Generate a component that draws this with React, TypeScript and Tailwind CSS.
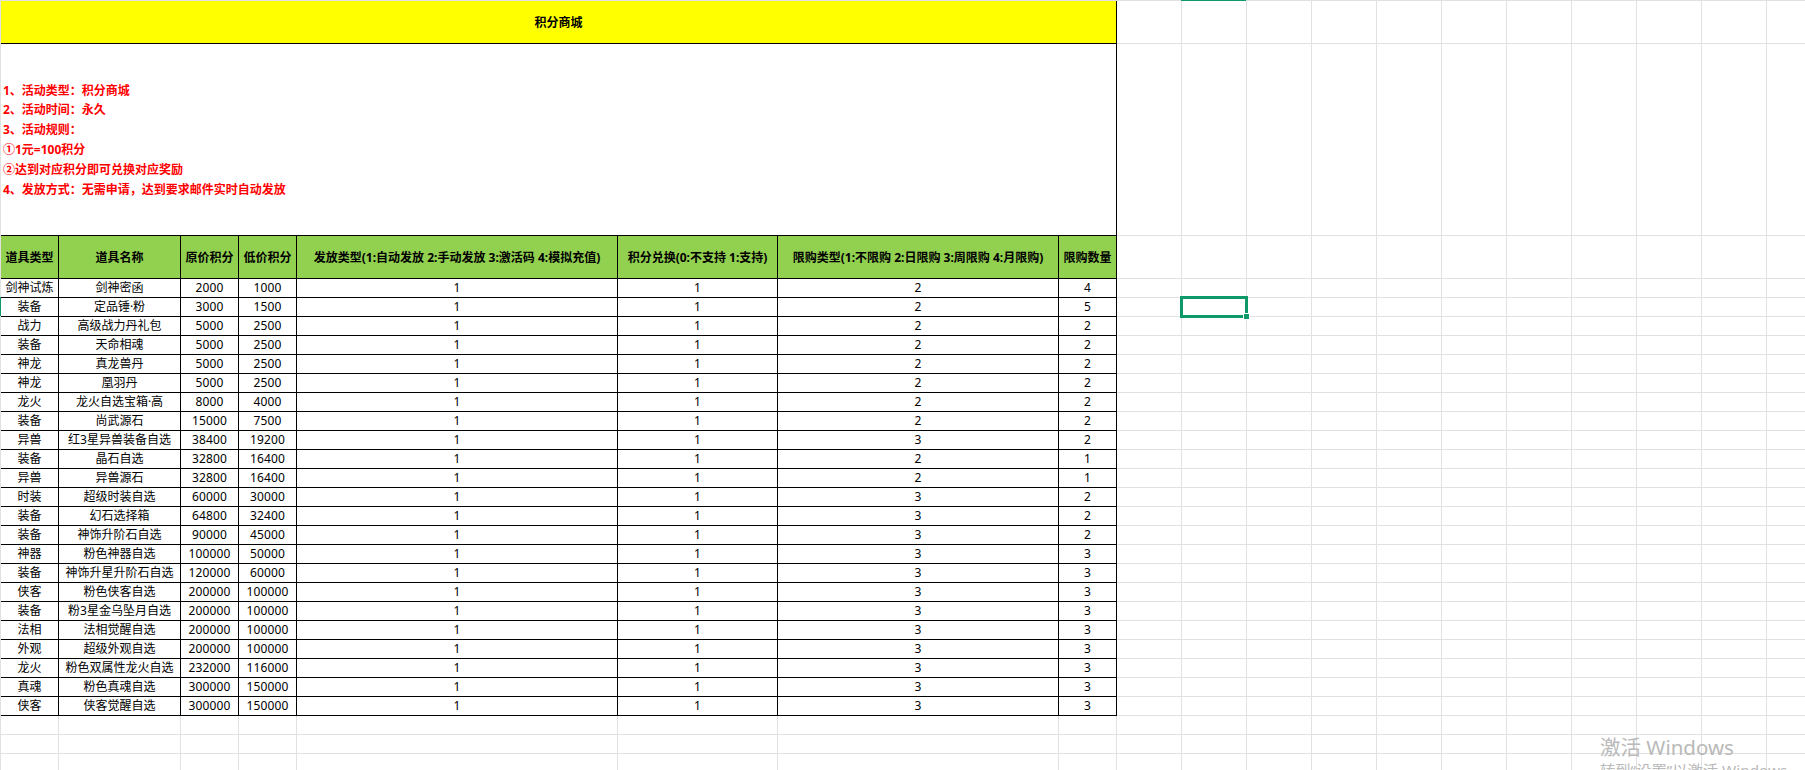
const rows: [string, string, string, string, string, string][] = [
  ["剑神试炼", "剑神密函", "2000", "1000", "2", "4"],
  ["装备", "定品锤·粉", "3000", "1500", "2", "5"],
  ["战力", "高级战力丹礼包", "5000", "2500", "2", "2"],
  ["装备", "天命相魂", "5000", "2500", "2", "2"],
  ["神龙", "真龙兽丹", "5000", "2500", "2", "2"],
  ["神龙", "凰羽丹", "5000", "2500", "2", "2"],
  ["龙火", "龙火自选宝箱·高", "8000", "4000", "2", "2"],
  ["装备", "尚武源石", "15000", "7500", "2", "2"],
  ["异兽", "红3星异兽装备自选", "38400", "19200", "3", "2"],
  ["装备", "晶石自选", "32800", "16400", "2", "1"],
  ["异兽", "异兽源石", "32800", "16400", "2", "1"],
  ["时装", "超级时装自选", "60000", "30000", "3", "2"],
  ["装备", "幻石选择箱", "64800", "32400", "3", "2"],
  ["装备", "神饰升阶石自选", "90000", "45000", "3", "2"],
  ["神器", "粉色神器自选", "100000", "50000", "3", "3"],
  ["装备", "神饰升星升阶石自选", "120000", "60000", "3", "3"],
  ["侠客", "粉色侠客自选", "200000", "100000", "3", "3"],
  ["装备", "粉3星金乌坠月自选", "200000", "100000", "3", "3"],
  ["法相", "法相觉醒自选", "200000", "100000", "3", "3"],
  ["外观", "超级外观自选", "200000", "100000", "3", "3"],
  ["龙火", "粉色双属性龙火自选", "232000", "116000", "3", "3"],
  ["真魂", "粉色真魂自选", "300000", "150000", "3", "3"],
  ["侠客", "侠客觉醒自选", "300000", "150000", "3", "3"],
];

const widths = [
  "w-[58px]",
  "w-[122px]",
  "w-[58px]",
  "w-[58px]",
  "w-[321px]",
  "w-[160px]",
  "w-[281px]",
  "w-[58px]",
];

const headers = [
  "道具类型",
  "道具名称",
  "原价积分",
  "低价积分",
  "发放类型(1:自动发放 2:手动发放 3:激活码 4:模拟充值)",
  "积分兑换(0:不支持 1:支持)",
  "限购类型(1:不限购 2:日限购 3:周限购 4:月限购)",
  "限购数量",
];

const notes = [
  "1、活动类型：积分商城",
  "2、活动时间：永久",
  "3、活动规则：",
  "①1元=100积分",
  "②达到对应积分即可兑换对应奖励",
  "4、发放方式：无需申请，达到要求邮件实时自动发放",
];

const emptyCols = Array.from({ length: 11 }, (_, i) => i);

function EmptyCells() {
  return (
    <>
      {emptyCols.map((i) => (
        <div key={i} className="h-full w-[65px] shrink-0 border-r border-b border-[#e1e1e1]" />
      ))}
    </>
  );
}

function Cell({ width, children }: { width: string; children: string }) {
  return (
    <div
      className={`${width} flex h-full shrink-0 items-center justify-center whitespace-nowrap border-r border-b border-black`}
    >
      {children}
    </div>
  );
}

export default function App() {
  return (
    <div className="relative flex h-[770px] w-[1805px] flex-col overflow-hidden bg-white font-['Noto_Sans','Noto_Sans_CJK_SC',sans-serif] text-[12px] leading-none text-black">
      {/* column header edge */}
      <div className="flex h-px w-full shrink-0 bg-[#e1e1e1]">
        <div className="w-[1181px] shrink-0" />
        <div className="w-[65px] shrink-0 bg-[#0e9a68]" />
      </div>

      <div className="flex min-h-0 flex-1">
        {/* row header edge */}
        <div className="flex w-px shrink-0 flex-col bg-[#e1e1e1]">
          <div className="h-[296px] shrink-0" />
          <div className="h-[19px] shrink-0 bg-[#0e9a68]" />
        </div>

        <div className="flex min-w-0 flex-1 flex-col">
          <div className="flex h-[43px] shrink-0">
            <div className="flex h-full w-[1116px] shrink-0 items-center justify-center border-r border-b border-black bg-[#ffff00] pt-px font-bold">
              积分商城
            </div>
            <EmptyCells />
          </div>

          <div className="flex h-[192px] shrink-0">
            <div className="flex h-full w-[1116px] shrink-0 flex-col justify-center border-r border-b border-black pl-[2px] pt-px font-bold leading-[19.8px] text-[#ff0000]">
              {notes.map((n) => (
                <div key={n}>{n}</div>
              ))}
            </div>
            <EmptyCells />
          </div>

          <div className="flex h-[43px] shrink-0">
            {headers.map((h, i) => (
              <div
                key={h}
                className={`${widths[i]} flex h-full shrink-0 items-center justify-center whitespace-nowrap border-r border-b border-black bg-[#92d050] pt-px font-bold`}
              >
                {h}
              </div>
            ))}
            <EmptyCells />
          </div>

          {rows.map((r) => (
            <div key={r[0] + r[1]} className="flex h-[19px] shrink-0">
              <Cell width={widths[0]}>{r[0]}</Cell>
              <Cell width={widths[1]}>{r[1]}</Cell>
              <Cell width={`${widths[2]} tracking-[0.14px]`}>{r[2]}</Cell>
              <Cell width={`${widths[3]} tracking-[0.14px]`}>{r[3]}</Cell>
              <Cell width={widths[4]}>1</Cell>
              <Cell width={widths[5]}>1</Cell>
              <Cell width={widths[6]}>{r[4]}</Cell>
              <Cell width={widths[7]}>{r[5]}</Cell>
              <EmptyCells />
            </div>
          ))}

          {[0, 1, 2].map((k) => (
            <div key={k} className="flex h-[19px] shrink-0">
              {widths.map((w, i) => (
                <div key={i} className={`${w} h-full shrink-0 border-r border-b border-[#e1e1e1]`} />
              ))}
              <EmptyCells />
            </div>
          ))}
        </div>
      </div>

      {/* selected cell */}
      <div className="absolute left-[1180px] top-[296px] h-[22px] w-[68px] border-[3px] border-[#0e9a68]" />
      <div className="absolute left-[1244px] top-[314px] h-[5px] w-[5px] bg-[#0e9a68] ring-1 ring-white" />

      {/* activation watermark */}
      <div className="absolute left-[1600px] top-[734px] whitespace-nowrap text-[20.5px] leading-[26px] text-[#b9b9b9]">
        激活 Windows
      </div>
      <div className="absolute left-[1600px] top-[761px] whitespace-nowrap text-[15.3px] leading-[18px] text-[#b9b9b9]">
        转到“设置”以激活 Windows。
      </div>
    </div>
  );
}
